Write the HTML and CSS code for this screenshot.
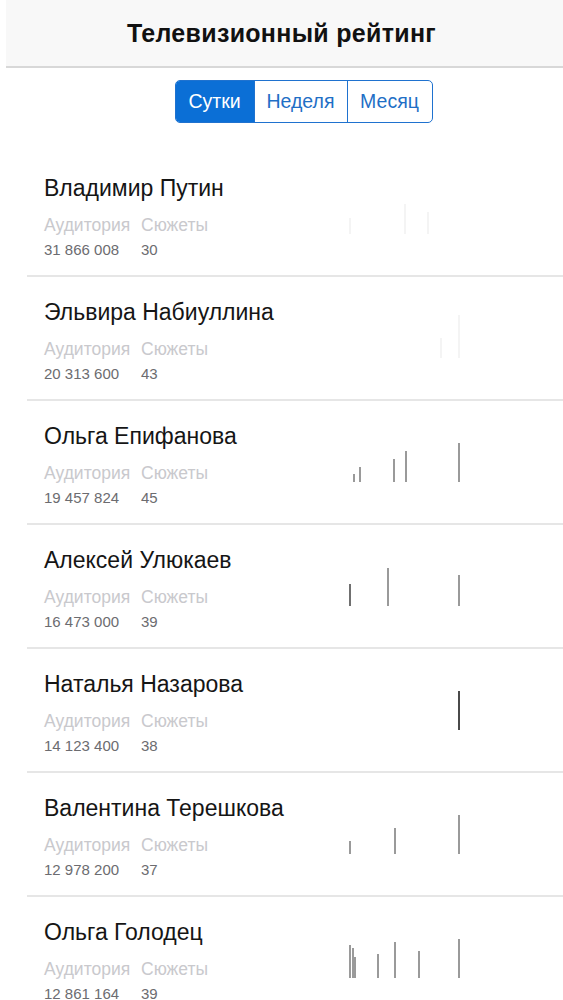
FILE: index.html
```html
<!DOCTYPE html>
<html lang="ru">
<head>
<meta charset="utf-8">
<link rel="stylesheet" href="styles.css">
</head>
<body>
<header class="topbar">
  <h1 class="title">Телевизионный рейтинг</h1>
</header>
<div class="seg-wrap">
  <div class="seg">
    <div class="seg-item active">Сутки</div>
    <div class="seg-item">Неделя</div>
    <div class="seg-item">Месяц</div>
  </div>
</div>
<ul class="list">
  <li class="row">
    <div class="info">
      <div class="name">Владимир Путин</div>
      <div class="stats"><span class="lbl aud">Аудитория</span><span class="lbl">Сюжеты</span></div>
      <div class="stats"><span class="val aud">31 866 008</span><span class="val">30</span></div>
    </div>
    <div class="chart faint">
      <i class="bar" style="left:9px;height:16px"></i>
      <i class="bar" style="left:64px;height:30px"></i>
      <i class="bar" style="left:87px;height:22px"></i>
    </div>
  </li>
  <li class="row">
    <div class="info">
      <div class="name">Эльвира Набиуллина</div>
      <div class="stats"><span class="lbl aud">Аудитория</span><span class="lbl">Сюжеты</span></div>
      <div class="stats"><span class="val aud">20 313 600</span><span class="val">43</span></div>
    </div>
    <div class="chart faint">
      <i class="bar" style="left:100px;height:20px"></i>
      <i class="bar" style="left:118px;height:43px"></i>
    </div>
  </li>
  <li class="row">
    <div class="info">
      <div class="name">Ольга Епифанова</div>
      <div class="stats"><span class="lbl aud">Аудитория</span><span class="lbl">Сюжеты</span></div>
      <div class="stats"><span class="val aud">19 457 824</span><span class="val">45</span></div>
    </div>
    <div class="chart">
      <i class="bar" style="left:13px;height:8px"></i>
      <i class="bar" style="left:19px;height:15px"></i>
      <i class="bar" style="left:53px;height:23px"></i>
      <i class="bar" style="left:65px;height:31px"></i>
      <i class="bar" style="left:118px;height:39px"></i>
    </div>
  </li>
  <li class="row">
    <div class="info">
      <div class="name">Алексей Улюкаев</div>
      <div class="stats"><span class="lbl aud">Аудитория</span><span class="lbl">Сюжеты</span></div>
      <div class="stats"><span class="val aud">16 473 000</span><span class="val">39</span></div>
    </div>
    <div class="chart">
      <i class="bar dark" style="left:9px;height:22px"></i>
      <i class="bar" style="left:47px;height:38px"></i>
      <i class="bar" style="left:118px;height:31px"></i>
    </div>
  </li>
  <li class="row">
    <div class="info">
      <div class="name">Наталья Назарова</div>
      <div class="stats"><span class="lbl aud">Аудитория</span><span class="lbl">Сюжеты</span></div>
      <div class="stats"><span class="val aud">14 123 400</span><span class="val">38</span></div>
    </div>
    <div class="chart">
      <i class="bar darkest" style="left:118px;height:39px"></i>
    </div>
  </li>
  <li class="row">
    <div class="info">
      <div class="name">Валентина Терешкова</div>
      <div class="stats"><span class="lbl aud">Аудитория</span><span class="lbl">Сюжеты</span></div>
      <div class="stats"><span class="val aud">12 978 200</span><span class="val">37</span></div>
    </div>
    <div class="chart">
      <i class="bar" style="left:9px;height:13px"></i>
      <i class="bar" style="left:54px;height:26px"></i>
      <i class="bar" style="left:118px;height:39px"></i>
    </div>
  </li>
  <li class="row">
    <div class="info">
      <div class="name">Ольга Голодец</div>
      <div class="stats"><span class="lbl aud">Аудитория</span><span class="lbl">Сюжеты</span></div>
      <div class="stats"><span class="val aud">12 861 164</span><span class="val">39</span></div>
    </div>
    <div class="chart">
      <i class="bar" style="left:9px;height:33px"></i>
      <i class="bar" style="left:12px;height:30px"></i>
      <i class="bar" style="left:14px;height:21px"></i>
      <i class="bar" style="left:37px;height:24px"></i>
      <i class="bar" style="left:54px;height:36px"></i>
      <i class="bar" style="left:78px;height:27px"></i>
      <i class="bar" style="left:118px;height:39px"></i>
    </div>
  </li>
</ul>
</body>
</html>
```
FILE: styles.css
```css
* { box-sizing: border-box; }
html, body {
  margin: 0;
  padding: 0;
  background: #ffffff;
  font-family: "Liberation Sans", Arial, sans-serif;
  overflow: hidden;
}
.topbar {
  height: 68px;
  background: #f8f8f8;
  display: flex;
  align-items: center;
  justify-content: center;
  margin-left: 6px;
  padding-right: 6px;
  border-bottom: 2px solid #d8d8d8;
}
.title {
  margin: 0;
  font-size: 25px;
  font-weight: bold;
  color: #111;
  letter-spacing: 0.3px;
}
.seg-wrap {
  display: flex;
  justify-content: center;
  padding: 12px 0 30px 44px;
}
.seg {
  display: flex;
  height: 43px;
  border: 1.5px solid #1f72cf;
  border-radius: 5px;
  overflow: hidden;
}
.seg-item {
  display: flex;
  align-items: center;
  justify-content: center;
  font-size: 19.5px;
  color: #1f6fc6;
  border-left: 1.5px solid #1f72cf;
}
.seg-item:first-child { border-left: none; width: 78px; }
.seg-item:nth-child(2) { width: 93px; }
.seg-item:nth-child(3) { width: 85px; }
.seg-item.active {
  background: #0b6fd6;
  color: #ffffff;
}
.list {
  list-style: none;
  margin: 0;
  padding: 0;
}
.row {
  display: flex;
  margin-left: 27px;
  padding-left: 17px;
  height: 124px;
  border-bottom: 2px solid #e6e6e6;
}
.info {
  padding-top: 21px;
  width: 296px;
}
.name {
  font-size: 23px;
  line-height: 28px;
  color: #151515;
}
.stats {
  display: flex;
}
.stats:nth-child(2) { margin-top: 12px; }
.stats:nth-child(3) { margin-top: 4px; }
.lbl {
  font-size: 17.5px;
  line-height: 22px;
  color: #c9c9cd;
}
.val {
  font-size: 15px;
  line-height: 20px;
  color: #6c6c70;
}
.aud { width: 97px; }
.chart {
  position: relative;
  width: 130px;
  height: 40px;
  margin-top: 41px;
}
.chart.faint { opacity: 0.1; }
.bar {
  position: absolute;
  bottom: 0;
  width: 1.5px;
  background: #9a9a9a;
}
.bar.dark { background: #707070; }
.bar.darkest { background: #4a4a4a; width: 2px; }
```
